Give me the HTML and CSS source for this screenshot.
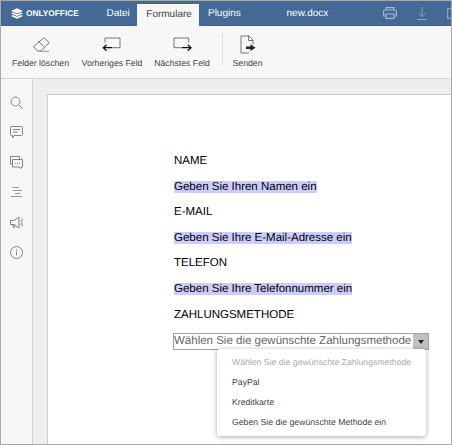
FILE: index.html
```html
<!DOCTYPE html>
<html lang="de">
<head>
  <meta charset="UTF-8" />
  <title>new.docx</title>
  <link rel="stylesheet" href="styles.css">
</head>
<body>

<div class="app">
  <div class="header">
    <div class="logo">
      <svg width="12" height="11" viewBox="0 0 17 15"><path d="M8.500 0 17 3.800 8.500 7.600 0 3.800Z" fill="#fff"/><path d="M2.600 6 8.500 8.700 14.400 6 17 7.300 8.500 11.200 0 7.300Z" fill="#fff"/><path d="M2.600 9.600 8.500 12.200l5.900-2.600L17 10.900 8.500 14.800 0 10.900Z" fill="#fff"/></svg>
      <span>ONLYOFFICE</span>
    </div>
    <div class="tab tab-datei">Datei</div>
    <div class="tab tab-active">Formulare</div>
    <div class="tab tab-plugins">Plugins</div>
    <div class="filename">new.docx</div>
    <div class="header-icons">
      <svg width="14" height="12" viewBox="0 0 14 12" fill="none" stroke="#a3b7cf" stroke-width="1.200"><path d="M3 3V.6h8V3M3 9H.6V4.500Q.6 3 2 3h10q1.400 0 1.400 1.500V9H11"/><path d="M3 7h8v4.400H3Z"/></svg>
      <svg width="10" height="13" viewBox="0 0 10 13" fill="none" stroke="#86a1c0" stroke-width="1"><path d="M5 0v9.500M1.500 6 5 9.500 8.500 6M0 12.500h10"/></svg>
      <svg width="4" height="11" viewBox="0 0 4 11" fill="none" stroke="#86a1c0" stroke-width="1.200"><path d="M4 .6H.6v9.800H4"/></svg>
    </div>
  </div>

  <div class="toolbar">
    <div class="tool tool-clear">
      <svg width="24" height="20" viewBox="0 0 24 20" fill="none" stroke="#666" stroke-width=".9"><path d="M4.500 11.700 14.800 2.700l5.400 5-8.400 8.300H8.500Z"/><path d="M9.200 5.900 14.800 11.700"/><path d="M10.800 16.300H20" stroke="#888"/></svg>
      <span>Felder löschen</span>
    </div>
    <div class="tool tool-prev">
      <svg width="24" height="20" viewBox="0 0 24 20" fill="none" stroke="#666" stroke-width=".9"><path d="M5 7.500V3h15v9.700h-8"/><path d="M3.300 12.700H12M6.500 9.700l-3.200 3 3.200 3" stroke="#111" stroke-width="1.300"/></svg>
      <span>Vorheriges Feld</span>
    </div>
    <div class="tool tool-next">
      <svg width="24" height="20" viewBox="0 0 24 20" fill="none" stroke="#666" stroke-width=".9"><path d="M18.700 7.500V3H4v9.700h8"/><path d="M12 12.700h9M17.800 9.700l3.200 3-3.200 3" stroke="#111" stroke-width="1.300"/></svg>
      <span>Nächstes Feld</span>
    </div>
    <div class="tool-sep"></div>
    <div class="tool tool-send">
      <svg width="16" height="20" viewBox="0 0 16 20" fill="none" stroke="#666" stroke-width=".9"><path d="M9 18H1V1h8l4 4v4.500"/><path d="M8.500 1v4.500H13"/><path d="M6 11.500h4.500V9.300l5 3.400-5 3.400v-2.200H6Z" fill="#222" stroke="none"/></svg>
      <span>Senden</span>
    </div>
  </div>

  <div class="main">
    <div class="sidebar">
      <svg width="13" height="13" viewBox="0 0 13 13" fill="none" stroke="#888" stroke-width="1"><circle cx="5.500" cy="5.500" r="4.500"/><path d="M9 9l4 4"/></svg>
      <svg width="13" height="13" viewBox="0 0 13 13" fill="none" stroke="#777" stroke-width=".9"><path d="M1.500.5h10a1 1 0 0 1 1 1v7a1 1 0 0 1-1 1H4L2.500 12V9.500h-1a1 1 0 0 1-1-1v-7a1 1 0 0 1 1-1Z"/><path d="M3 3.500h7M3 6h4.500"/></svg>
      <svg width="13" height="13" viewBox="0 0 13 13" fill="none" stroke="#777" stroke-width=".9"><path d="M2.500 8H.5V.5h9V3"/><path d="M2.500 3.500h10v7.500h-1.500v1.500L9 11H2.500Z"/><path d="M5 7.500h1M7 7.500h1M9 7.500h1"/></svg>
      <svg width="13" height="13" viewBox="0 0 13 13" fill="none" stroke="#999" stroke-width="1"><path d="M2 1.500h7M3 4.500h9M5 7.500h5M1 10.500h11"/></svg>
      <svg width="13" height="13" viewBox="0 0 13 13" fill="none" stroke="#777" stroke-width=".9"><path d="M.5 4.500H4L9 1v11L4 8.500H.5Z"/><path d="M2.500 8.500l1 3h1l-.5-3"/><path d="M10.500 4a3 3 0 0 1 0 5M11.500 2.500a5 5 0 0 1 0 8"/></svg>
      <svg width="13" height="13" viewBox="0 0 13 13" fill="none" stroke="#777" stroke-width=".9"><circle cx="6.500" cy="6.500" r="6"/><path d="M6.500 5.500v4M6.500 3.200v1.200"/></svg>
    </div>

    <div class="canvas">
      <div class="page">
        <p class="line">NAME</p>
        <p class="line"><span class="field">Geben Sie Ihren Namen ein</span></p>
        <p class="line">E-MAIL</p>
        <p class="line"><span class="field">Geben Sie Ihre E-Mail-Adresse ein</span></p>
        <p class="line">TELEFON</p>
        <p class="line"><span class="field">Geben Sie Ihre Telefonnummer ein</span></p>
        <p class="line">ZAHLUNGSMETHODE</p>
        <div class="select">
          <span class="select-text">Wählen Sie die gewünschte Zahlungsmethode</span>
          <span class="select-btn"><span class="caret"></span></span>
          <ul class="menu">
            <li class="menu-first">Wählen Sie die gewünschte Zahlungsmethode</li>
            <li>PayPal</li>
            <li>Kreditkarte</li>
            <li>Geben Sie die gewünschte Methode ein</li>
          </ul>
        </div>
      </div>
    </div>
  </div>
</div>

</body>
</html>
```

FILE: styles.css
```css
html, body { margin: 0; padding: 0; }
body { width: 452px; height: 445px; overflow: hidden; font-family: "Liberation Sans", Arial, sans-serif; background: #fff; text-rendering: geometricPrecision; }

.app { width: 452px; height: 445px; box-sizing: border-box; border: 1px solid #a9a9a9; display: flex; flex-direction: column; overflow: hidden; }

.header { height: 25px; flex: none; background: #446995; border-bottom: 1px solid #3d5f88; box-sizing: border-box; display: flex; color: #fff; font-size: 10px; }
.logo { width: 100px; display: flex; align-items: center; gap: 3px; padding-left: 10px; box-sizing: border-box; font-size: 8.300px; font-weight: bold; }
.tab { line-height: 25px; box-sizing: border-box; }
.tab-datei { width: 37px; padding-left: 6px; }
.tab-active { width: 62px; height: 22px; margin-top: 3px; line-height: 22px; padding-left: 9px; background: #f7f7f7; color: #444; }
.tab-plugins { width: 79px; padding-left: 9px; }
.filename { width: 106px; padding-left: 9px; box-sizing: border-box; line-height: 25px; }
.header-icons { display: flex; align-items: center; gap: 20px; }

.toolbar { height: 53px; flex: none; background: #f7f7f7; border-bottom: 1px solid #d4d4d4; box-sizing: border-box; display: flex; }
.tool { display: flex; flex-direction: column; align-items: center; font-size: 8.700px; line-height: 10px; color: #444; padding-top: 9px; box-sizing: border-box; white-space: nowrap; }
.tool svg { margin-bottom: 3px; }
.tool-clear { width: 57px; margin-left: 11px; }
.tool-prev { width: 60px; margin-left: 13px; }
.tool-next { width: 54px; margin-left: 13px; }
.tool-sep { width: 1px; height: 33px; margin: 7px 0 0 13px; background: #e0e0e0; }
.tool-send { width: 29px; margin-left: 10px; }

.main { flex: 1; display: flex; min-height: 0; }
.sidebar { width: 32px; flex: none; background: #f7f7f7; border-right: 1px solid #d4d4d4; box-sizing: border-box; display: flex; flex-direction: column; align-items: center; gap: 17px; padding-top: 17px; }
.canvas { flex: 1; background: #eee; padding: 15px 0 0 14px; }
.page { height: 400px; background: #fff; border-left: 1px solid #ccc; border-top: 1px solid #ccc; padding: 59px 0 0 126px; box-sizing: border-box; font-size: 11.500px; color: #000; }

.line { margin: 0 0 10px; height: 15.600px; line-height: 15.600px; }
.field { background: #ccccff; }

.select { position: relative; width: 256px; height: 17px; margin-left: -1px; border: 1px solid #a0a0a0; box-sizing: border-box; display: flex; color: #666; line-height: 14px; white-space: nowrap; }
.select-text { flex: 1; }
.select-btn { width: 15px; flex: none; background: #c0c0c0; display: flex; align-items: center; justify-content: center; }
.caret { width: 0; height: 0; border-left: 3.500px solid transparent; border-right: 3.500px solid transparent; border-top: 4px solid #222; margin-top: 1px; }

.menu { position: absolute; left: 43px; top: 15px; width: 209px; height: 87px; margin: 0; padding: 3px 0 0; list-style: none; background: #fff; border-radius: 3px; box-shadow: 0 1px 5px rgba(0,0,0,.35); box-sizing: border-box; font-size: 8.700px; color: #444; }
.menu li { height: 20px; line-height: 20px; padding-left: 15px; }
.menu-first { color: #aaa; }
```
